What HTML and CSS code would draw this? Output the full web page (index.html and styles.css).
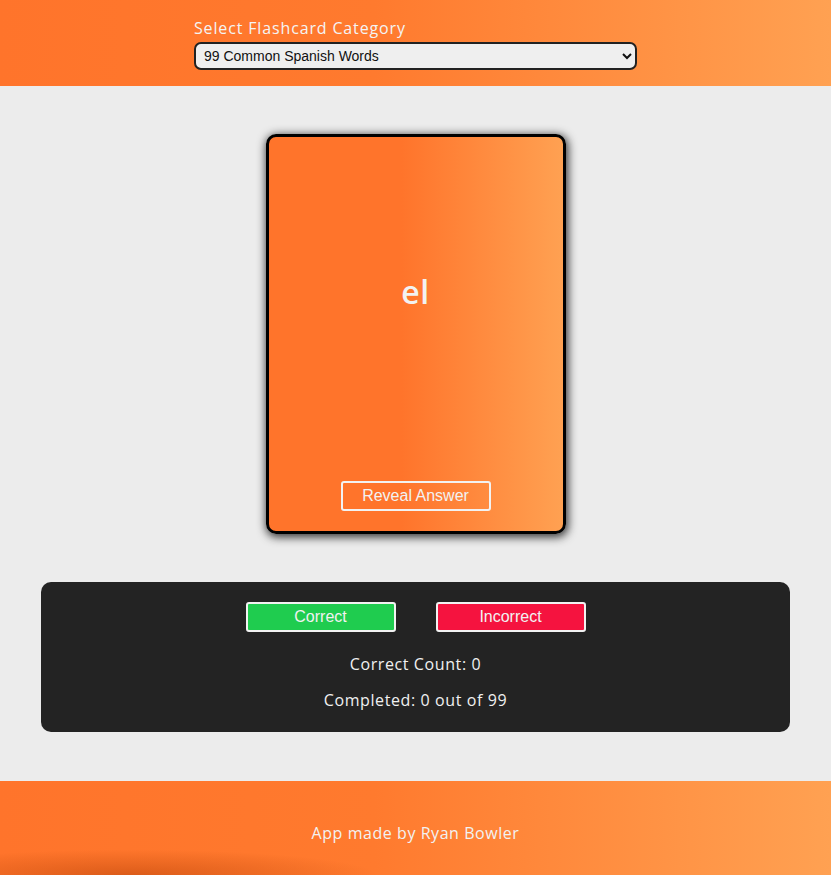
FILE: index.html
```html
<!DOCTYPE html>
<html lang="en">
<head>
<meta charset="utf-8">
<title>Flashcards</title>
<link rel="stylesheet" href="styles.css">
</head>
<body>
<header class="top">
  <div class="picker">
    <label class="picker-label" for="cat">Select Flashcard Category</label>
    <select id="cat" class="picker-select">
      <option>99 Common Spanish Words</option>
    </select>
  </div>
</header>
<main class="main">
  <div class="card">
    <div class="card-word">el</div>
    <button class="reveal">Reveal Answer</button>
  </div>
  <section class="panel">
    <div class="panel-buttons">
      <button class="btn btn-correct">Correct</button>
      <button class="btn btn-incorrect">Incorrect</button>
    </div>
    <p class="panel-text">Correct Count: 0</p>
    <p class="panel-text">Completed: 0 out of 99</p>
  </section>
</main>
<footer class="foot">App made by Ryan Bowler</footer>
</body>
</html>
```
FILE: styles.css
```css
* { box-sizing: border-box; }
html, body { margin: 0; padding: 0; }
body {
  background: #ececec;
  font-family: "Open Sans", "Noto Sans", sans-serif;
  color: #eeeeee;
}
.top {
  height: 86px;
  background: linear-gradient(90deg, #ff742b 0%, #ff7a2e 45%, #ffa152 100%);
  display: flex;
  justify-content: center;
  padding-top: 16px;
}
.picker {
  width: 443px;
  display: flex;
  flex-direction: column;
}
.picker-label {
  font-size: 16px;
  line-height: 24px;
  height: 26px;
  color: #f4f4f4;
  letter-spacing: 0.85px;
}
.picker-select {
  height: 28px;
  border: 2px solid #222;
  border-radius: 7px;
  background: #efefef;
  font-family: "Liberation Sans", Arial, sans-serif;
  font-size: 14px;
  color: #111;
  padding: 0 4px;
}
.main {
  display: flex;
  flex-direction: column;
  align-items: center;
  padding: 48px 0 49px;
}
.card {
  width: 300px;
  height: 400px;
  border: 3px solid #000;
  border-radius: 10px;
  background: linear-gradient(90deg, #ff742b 0%, #ff742b 45%, #ffa152 100%);
  box-shadow: 1px 2px 10px 1px rgba(0,0,0,0.8);
  display: flex;
  flex-direction: column;
  align-items: center;
}
.card-word {
  margin-top: 135px;
  font-size: 32px;
  font-weight: 600;
  color: #f2f2f2;
  line-height: 40px;
  letter-spacing: 0.5px;
}
.reveal {
  margin-top: auto;
  margin-bottom: 20px;
  width: 150px;
  height: 30px;
  border: 2px solid #f2f2f2;
  border-radius: 3px;
  background: transparent;
  color: #f2f2f2;
  font-family: "Liberation Sans", Arial, sans-serif;
  font-size: 16px;
}
.panel {
  margin-top: 48px;
  width: 749px;
  height: 150px;
  background: #232323;
  border-radius: 10px;
  padding-top: 20px;
  display: flex;
  flex-direction: column;
  align-items: center;
}
.panel-buttons {
  display: flex;
  gap: 40px;
}
.btn {
  width: 150px;
  height: 30px;
  border: 2px solid #f2f2f2;
  border-radius: 3px;
  color: #f2f2f2;
  font-family: "Liberation Sans", Arial, sans-serif;
  font-size: 16px;
}
.btn-correct { background: #1fcc4f; }
.btn-incorrect { background: #f5133f; }
.panel-text {
  margin: 0;
  font-size: 16px;
  line-height: 24px;
  color: #f0f0f0;
  letter-spacing: 0.6px;
}
.panel-buttons + .panel-text { margin-top: 20px; }
.panel-text + .panel-text { margin-top: 12px; }
.foot {
  height: 94px;
  background:
    radial-gradient(ellipse 330px 34px at 130px 100%, rgba(190,70,10,0.55), rgba(190,70,10,0) 75%),
    linear-gradient(90deg, #ff742b 0%, #ff7a2e 45%, #ffa152 100%);
  display: flex;
  align-items: center;
  justify-content: center;
  font-size: 16px;
  color: #f2f2f2;
  padding-top: 10px;
  letter-spacing: 0.55px;
}
```
